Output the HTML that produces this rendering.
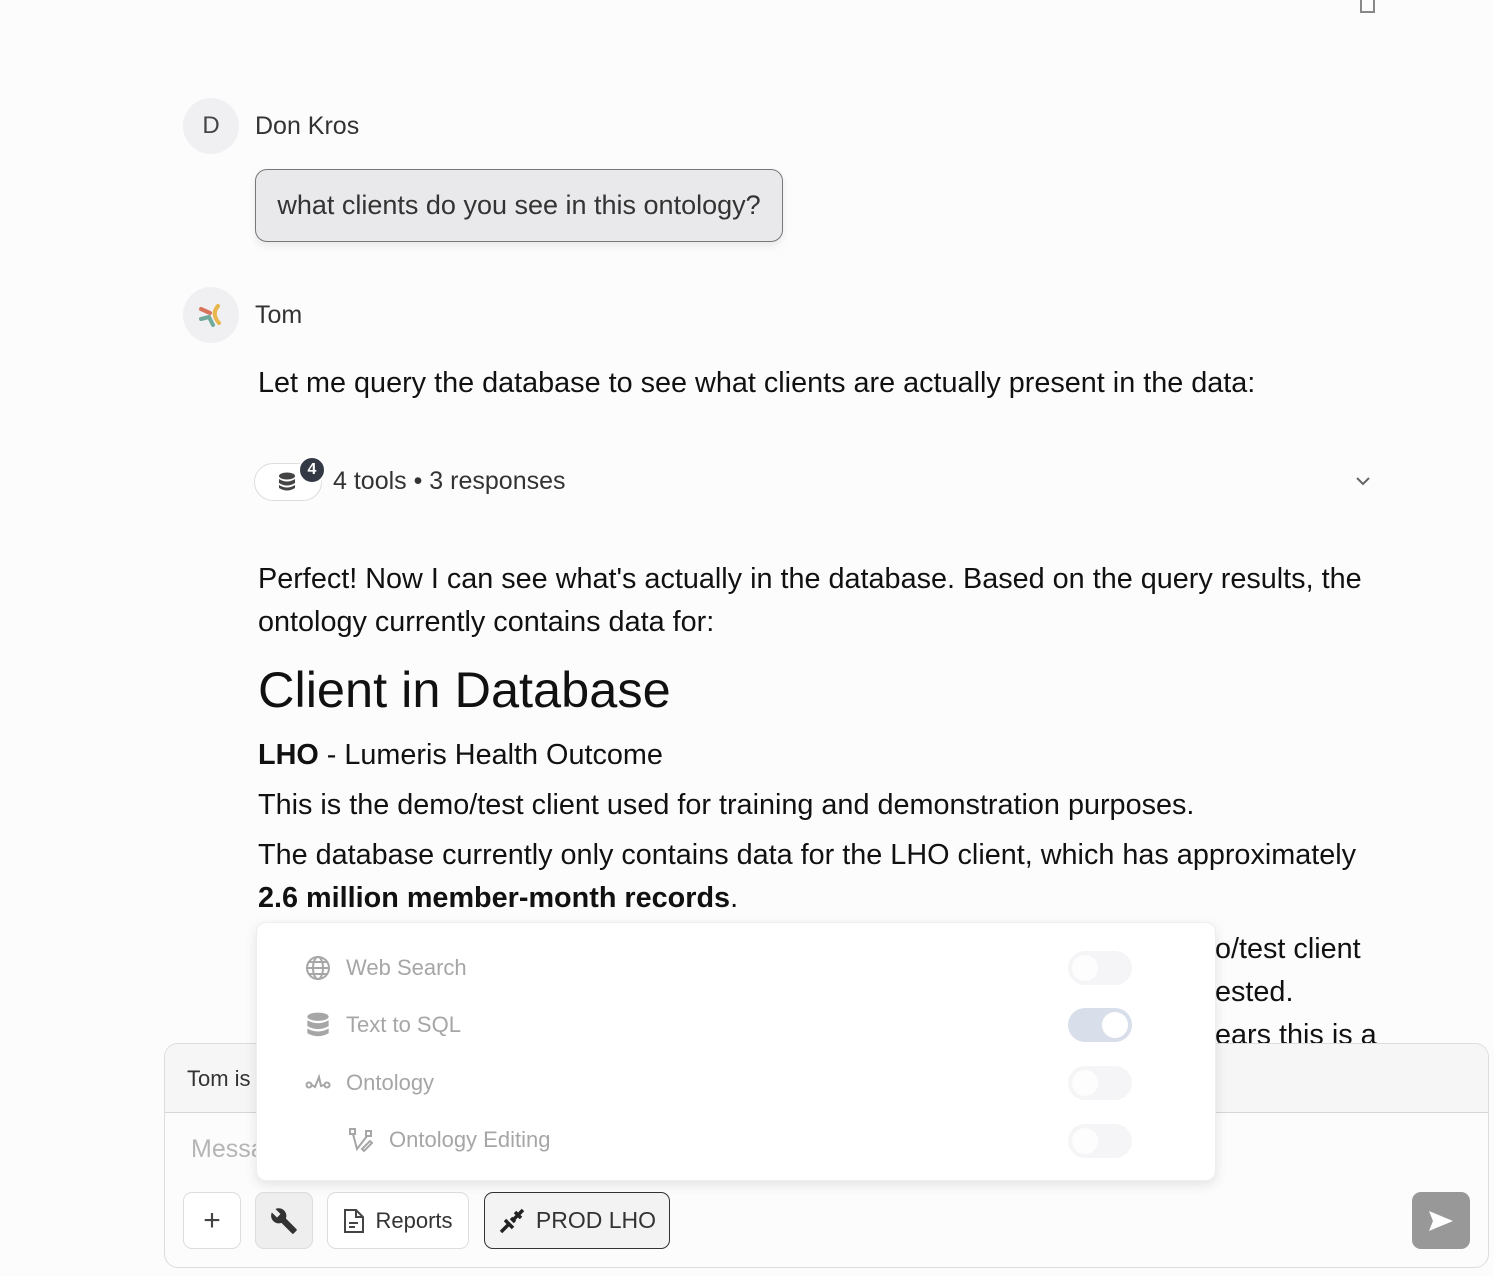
<!DOCTYPE html>
<html><head><meta charset="utf-8"><style>
*{margin:0;padding:0;box-sizing:border-box}
body{width:1494px;height:1276px;background:#fcfcfd;font-family:"Liberation Sans",sans-serif;position:relative;overflow:hidden;color:#111}
.a{position:absolute}
.av{width:56px;height:56px;border-radius:50%;background:#f0f0f3;display:flex;align-items:center;justify-content:center;font-size:24px;color:#444}
.name{font-size:25px;color:#333}
.p{font-size:28.8px;line-height:43px;color:#111}
.row{position:absolute;left:305px;display:flex;align-items:center;gap:15px;font-size:22px;color:#a6a6a6}
.tg{position:absolute;left:1068px;width:64px;height:34px;border-radius:17px;background:#f5f5f7}
.tg::after{content:"";position:absolute;left:4px;top:4px;width:26px;height:26px;border-radius:50%;background:#fdfdfd}
.tg.on::after{display:none}
.btn{position:absolute;top:1192px;height:57px;border:1px solid #ddd;border-radius:9px;background:#fff;display:flex;align-items:center;justify-content:center;gap:10px;font-size:22px;color:#333}
</style></head><body>
<div class="a av" style="left:183px;top:98px">D</div>
<div class="a name" style="left:255px;top:112px">Don Kros</div>
<div class="a" style="left:255px;top:169px;width:528px;height:73px;border:1px solid #777;border-radius:12px;background:#e9e8ea;box-shadow:0 4px 8px rgba(0,0,0,.08);font-size:27px;color:#333;display:flex;align-items:center;justify-content:center">what clients do you see in this ontology?</div>
<div class="a av" style="left:183px;top:287px"><svg width="30" height="30" viewBox="0 0 30 30"><path d="M5 9 L14 13" stroke="#d6735a" stroke-width="4" stroke-linecap="round"/><path d="M5 19 L13 17 L17 25" stroke="#6faa9a" stroke-width="4" fill="none" stroke-linecap="round"/><path d="M22 6 Q15 14 23 23" stroke="#e8b64c" stroke-width="4" fill="none" stroke-linecap="round"/></svg></div>
<div class="a name" style="left:255px;top:301px">Tom</div>
<div class="a p" style="left:258px;top:362px">Let me query the database to see what clients are actually present in the data:</div>
<div class="a" style="left:254px;top:463px;width:68px;height:38px;border:1px solid #ddd;border-radius:19px;background:#fff"></div>
<svg class="a" style="left:278px;top:472px" width="18" height="20" viewBox="0 0 18 20"><ellipse cx="9" cy="4" rx="8" ry="3.5" fill="#444"/><path d="M1 7 Q9 12 17 7 V11 Q9 16 1 11Z" fill="#444"/><path d="M1 13 Q9 18 17 13 V16 Q9 21 1 16Z" fill="#444"/></svg>
<div class="a" style="left:298px;top:456px;width:28px;height:28px;border-radius:50%;background:#333a45;color:#fff;font-size:16px;font-weight:bold;display:flex;align-items:center;justify-content:center;border:2px solid #fff">4</div>
<div class="a" style="left:333px;top:467px;font-size:25px;color:#333">4 tools • 3 responses</div>
<svg class="a" style="left:1354px;top:474px" width="18" height="14"><path d="M3 4 L9 10 L15 4" stroke="#666" stroke-width="2" fill="none"/></svg>
<svg class="a" style="left:1356px;top:0" width="24" height="14"><path d="M5 0 V12 H18 V0" stroke="#888" stroke-width="2" fill="none"/></svg>
<div class="a p" style="left:258px;top:558px;width:1120px">Perfect! Now I can see what's actually in the database. Based on the query results, the ontology currently contains data for:</div>
<div class="a" style="left:258px;top:660px;font-size:50.5px;color:#111">Client in Database</div>
<div class="a p" style="left:258px;top:734px"><b>LHO</b> - Lumeris Health Outcome</div>
<div class="a p" style="left:258px;top:784px">This is the demo/test client used for training and demonstration purposes.</div>
<div class="a p" style="left:258px;top:834px;width:1110px">The database currently only contains data for the LHO client, which has approximately <b>2.6 million member-month records</b>.</div>
<div class="a p" style="left:1215px;top:928px">o/test client</div>
<div class="a p" style="left:1215px;top:971px">ested.</div>
<div class="a" style="left:1215px;top:1014px;height:29px;overflow:hidden"><div class="p">ears this is a</div></div>
<div class="a" style="left:164px;top:1043px;width:1325px;height:225px;border:1px solid #ddd;border-radius:14px;background:#fcfcfd;overflow:hidden">
<div style="height:69px;background:#f6f6f7;border-bottom:1px solid #d6d6d6;padding:22px 0 0 22px;font-size:22px;color:#333">Tom is</div>
<div style="padding:22px 0 0 26px;font-size:25px;color:#b5b5b5">Message</div>
</div>
<div class="btn" style="left:183px;width:58px"><span style="font-size:30px;color:#444;font-weight:300">+</span></div>
<div class="btn" style="left:255px;width:58px;background:#eeeeee"><svg width="28" height="28" viewBox="0 0 24 24"><path d="M22.7 19l-9.1-9.1c.9-2.3.4-5-1.5-6.9-2-2-5-2.4-7.4-1.3L9 6 6 9 1.6 4.7C.4 7.1.9 10.1 2.9 12.1c1.9 1.9 4.6 2.4 6.9 1.5l9.1 9.1c.4.4 1 .4 1.4 0l2.3-2.3c.5-.4.5-1.1.1-1.4z" fill="#333"/></svg></div>
<div class="btn" style="left:327px;width:142px"><svg width="22" height="26" viewBox="0 0 22 26"><path d="M2 2 H13 L20 9 V24 H2Z M13 2 V9 H20" stroke="#444" stroke-width="2" fill="none"/><path d="M6 15 H15 M6 19 H12" stroke="#444" stroke-width="2"/></svg>Reports</div>
<div class="btn" style="left:484px;width:186px;border-color:#333;background:#f3f3f4;font-size:23px"><svg width="28" height="28" viewBox="0 0 28 28"><path d="M3 25 L9 19 M7 13 L15 21 M13 11 L17 15 M11 17 L8 20" stroke="#222" stroke-width="3.5"/><path d="M15 13 L21 7 M25 3 L21 7 M17 5 L23 11" stroke="#222" stroke-width="3.5"/></svg>PROD LHO</div>
<div class="a" style="left:1412px;top:1192px;width:58px;height:57px;border-radius:9px;background:#989898;display:flex;align-items:center;justify-content:center"><svg width="28" height="24" viewBox="0 0 28 24"><path d="M2 2 L26 12 L2 22 L6 12Z" fill="#fff"/></svg></div>
<div class="a" style="left:256px;top:922px;width:960px;height:259px;background:#fff;border:1px solid #eee;border-radius:10px;box-shadow:0 4px 12px rgba(0,0,0,.1)"></div>
<div class="row" style="top:955px"><svg width="26" height="26" viewBox="0 0 26 26" fill="none" stroke="#a6a6a6" stroke-width="2"><circle cx="13" cy="13" r="11"/><ellipse cx="13" cy="13" rx="5" ry="11"/><path d="M2 13 H24 M4 7 H22 M4 19 H22"/></svg>Web Search</div>
<div class="row" style="top:1012px"><svg width="26" height="26" viewBox="0 0 20 22"><ellipse cx="10" cy="4" rx="9" ry="3.5" fill="#a6a6a6"/><path d="M1 7 Q10 12 19 7 V12 Q10 17 1 12Z" fill="#a6a6a6"/><path d="M1 14 Q10 19 19 14 V18 Q10 23 1 18Z" fill="#a6a6a6"/></svg>Text to SQL</div>
<div class="row" style="top:1070px"><svg width="26" height="26" viewBox="0 0 26 26" fill="none" stroke="#a6a6a6" stroke-width="2"><circle cx="4" cy="15" r="2.5"/><circle cx="22" cy="15" r="2.5"/><path d="M7 15 L10 17 L14 7 L16 16 L19 15"/></svg>Ontology</div>
<div class="row" style="top:1127px;left:348px"><svg width="26" height="26" viewBox="0 0 26 26" fill="none" stroke="#a6a6a6" stroke-width="2"><rect x="2" y="2" width="5" height="5"/><rect x="18" y="4" width="5" height="5"/><path d="M5 7 L9 22 L19 9"/><path d="M14 22 L22 14 L24 16 L16 24Z"/></svg>Ontology Editing</div>
<div class="tg" style="top:951px"></div>
<div class="tg on" style="top:1008px;background:#d9dfea"><span style="position:absolute;left:34px;top:4px;width:26px;height:26px;border-radius:50%;background:#fff"></span></div>
<div class="tg" style="top:1066px"></div>
<div class="tg" style="top:1124px"></div>
</body></html>
